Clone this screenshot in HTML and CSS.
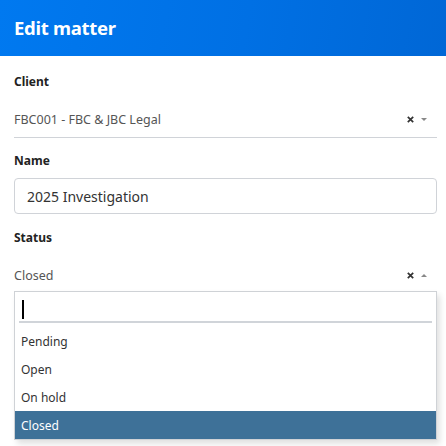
FILE: index.html
```html
<!DOCTYPE html>
<html lang="en">
<head>
<meta charset="utf-8">
<title>Edit matter</title>
<link rel="stylesheet" href="styles.css">
</head>
<body>
<header class="app-bar">
  <h1 class="app-title">Edit matter</h1>
</header>
<main class="form">
  <div class="field">
    <div class="field-label">Client</div>
    <div class="select">
      <span class="select-value">FBC001 - FBC &amp; JBC Legal</span>
      <svg class="select-clear" width="7" height="7" viewBox="0 0 7 7"><path d="M0.8 0.8 L6.2 6.2 M6.2 0.8 L0.8 6.2" stroke="#333" stroke-width="1.7"/></svg>
      <span class="select-arrow down"></span>
    </div>
  </div>
  <div class="field">
    <div class="field-label">Name</div>
    <div class="text-input">2025 Investigation</div>
  </div>
  <div class="field">
    <div class="field-label">Status</div>
    <div class="select">
      <span class="select-value">Closed</span>
      <svg class="select-clear" width="7" height="7" viewBox="0 0 7 7"><path d="M0.8 0.8 L6.2 6.2 M6.2 0.8 L0.8 6.2" stroke="#333" stroke-width="1.7"/></svg>
      <span class="select-arrow up"></span>
    </div>
    <div class="dropdown">
      <div class="dropdown-search"><span class="caret"></span></div>
      <ul class="options">
        <li class="option">Pending</li>
        <li class="option">Open</li>
        <li class="option">On hold</li>
        <li class="option selected">Closed</li>
      </ul>
    </div>
  </div>
  <div class="form-divider"></div>
</main>
</body>
</html>
```

FILE: styles.css
```css
* { box-sizing: border-box; }

html, body {
  margin: 0;
  padding: 0;
  background: #ffffff;
  font-family: "Noto Sans", "Open Sans", "DejaVu Sans", sans-serif;
  color: #222;
  overflow: hidden;
}

.app-bar {
  height: 56px;
  display: flex;
  align-items: center;
  padding: 0 14px 1px;
  background: linear-gradient(100deg, #0079f0 0%, #0070e4 55%, #0067d6 100%);
}

.app-title {
  margin: 0;
  color: #fff;
  font-size: 18.5px;
  font-weight: 700;
  letter-spacing: -0.3px;
}

.form {
  padding: 18px 9px 0 14px;
}

.field {
  position: relative;
}

.field-label {
  font-size: 12px;
  font-weight: 700;
  line-height: 16px;
  color: #222;
}

.select {
  height: 48px;
  display: flex;
  align-items: center;
  padding-top: 12px;
  border-bottom: 1px solid #d0d3d8;
  font-size: 12.5px;
  color: #555;
  margin-bottom: 15px;
}

.select-value { flex: 1; }

.select-clear {
  display: block;
  margin-right: 7px;
}

.select-arrow {
  width: 0;
  height: 0;
  margin-right: 10px;
  border-left: 3px solid transparent;
  border-right: 3px solid transparent;
}
.select-arrow.down { border-top: 3px solid #888; }
.select-arrow.up { border-bottom: 3px solid #888; }

.text-input {
  height: 36px;
  margin: 9px 0 16px;
  border: 1px solid #d0d3d8;
  border-radius: 4px;
  padding: 0 12px;
  display: flex;
  align-items: center;
  font-size: 14px;
  color: #333;
}

.dropdown {
  position: absolute;
  top: 61px;
  left: 0;
  right: 0;
  z-index: 2;
  background: #fff;
  border: 1px solid #cfd2d6;
  box-shadow: 3px 4px 6px rgba(0, 0, 0, 0.12);
}

.dropdown-search {
  margin: 5px 4px 4px;
  height: 26px;
  border-bottom: 2px solid #d0d4d9;
  display: flex;
  align-items: center;
  padding-left: 3px;
}

.caret {
  width: 2px;
  height: 19px;
  background: #000;
}

.options {
  list-style: none;
  margin: 0;
  padding: 0;
}

.option {
  height: 28px;
  display: flex;
  align-items: center;
  padding: 0 6px;
  font-size: 12px;
  color: #333;
}

.option.selected {
  background: #3e7198;
  color: #fff;
}

.form-divider {
  height: 138px;
  border-bottom: 1px solid #d0d3d8;
}
```
